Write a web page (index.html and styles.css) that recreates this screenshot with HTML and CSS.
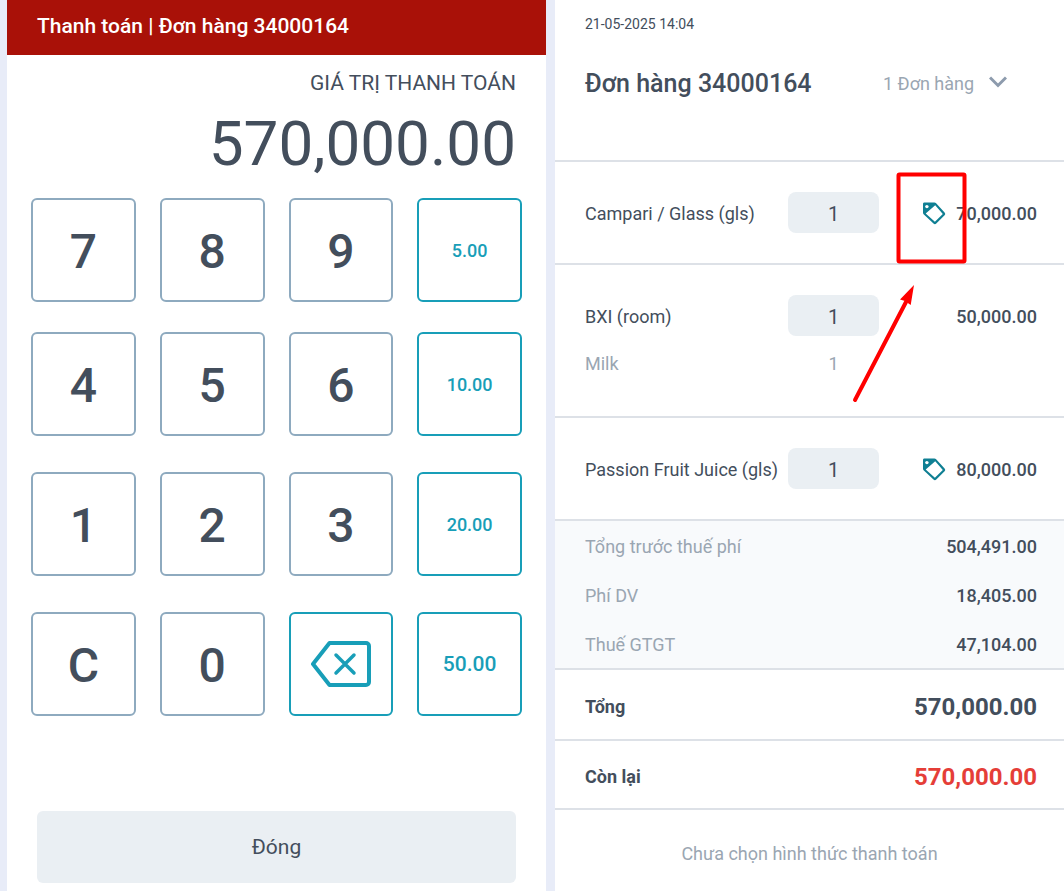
FILE: index.html
```
<!DOCTYPE html>
<html lang="vi">
<head>
  <meta charset="UTF-8">
  <meta name="viewport" content="width=device-width, initial-scale=1">
  <title>Thanh toán</title>
  <link rel="stylesheet" href="styles.css">
</head>
<body>
  <svg class="sprite" aria-hidden="true">
    <symbol id="tag" viewBox="0 0 24 24">
      <path d="M2 .5h10.500a2 2 0 0 1 1.400.6L22.600 10.500a2 2 0 0 1 0 2.800L14.300 21.600a2 2 0 0 1-2.800 0L1.600 12.200a2 2 0 0 1-.6-1.400V2a1.500 1.500 0 0 1 1-1.500z M13.200 3.200L3.700 11.400l9.200 8.400 7.900-7.900z" fill="currentColor" fill-rule="evenodd"/>
      <circle cx="4.900" cy="4.600" r="1.700" fill="#fff"/>
    </symbol>
  </svg>

  <div class="page">
    <main class="payment">
      <h1 class="payment-title">Thanh toán | Đơn hàng 34000164</h1>
      <div class="amount">
        <p class="amount-label">GIÁ TRỊ THANH TOÁN</p>
        <p class="amount-value">570,000.00</p>
      </div>
      <div class="keypad">
        <button type="button" class="key">7</button>
        <button type="button" class="key">8</button>
        <button type="button" class="key">9</button>
        <button type="button" class="key quick">5.00</button>
        <button type="button" class="key">4</button>
        <button type="button" class="key">5</button>
        <button type="button" class="key">6</button>
        <button type="button" class="key quick">10.00</button>
        <button type="button" class="key">1</button>
        <button type="button" class="key">2</button>
        <button type="button" class="key">3</button>
        <button type="button" class="key quick">20.00</button>
        <button type="button" class="key">C</button>
        <button type="button" class="key">0</button>
        <button type="button" class="key quick" aria-label="Xóa">
          <svg width="60" height="46" viewBox="0 0 60 46" fill="none" stroke="currentColor" stroke-width="4" stroke-linejoin="round" stroke-linecap="round">
            <path d="M18.500 2H55a3 3 0 0 1 3 3v36a3 3 0 0 1-3 3H18.500L2 23z"/>
            <path d="M25 14l18 18M43 14L25 32" stroke-width="3.500"/>
          </svg>
        </button>
        <button type="button" class="key quick large">50.00</button>
      </div>
      <button type="button" class="close">Đóng</button>
    </main>

    <aside class="order">
      <header class="order-head">
        <p class="order-date">21-05-2025 14:04</p>
        <div class="order-row">
          <h2 class="order-title">Đơn hàng 34000164</h2>
          <div class="picker">
            <select class="picker-select" aria-label="Chọn đơn hàng">
              <option>1 Đơn hàng</option>
            </select>
            <svg class="picker-arrow" width="18" height="12" viewBox="0 0 18 12" fill="none" stroke="currentColor" stroke-width="3">
              <path d="M1 1.500l8 8 8-8"/>
            </svg>
          </div>
        </div>
      </header>

      <div class="item">
        <label class="item-name" for="qty1">Campari / Glass (gls)</label>
        <input class="item-qty" id="qty1" type="text" value="1">
        <span class="item-price">
          <svg class="tag" width="24" height="24" aria-hidden="true"><use href="#tag"/></svg>
          70,000.00
        </span>
        <!-- khung đỏ và mũi tên chỉ vào nhãn giảm giá -->
        <svg class="hint" width="122" height="236" viewBox="0 0 122 236" aria-hidden="true">
          <rect x="50.500" y="4.500" width="66" height="87" rx="1" fill="none" stroke="#ff0000" stroke-width="4"/>
          <path d="M7 230L58 132" stroke="#ff0000" stroke-width="4" stroke-linecap="round"/>
          <path d="M66 115L52 129.500l5 1.500 5.700 4z" fill="#ff0000"/>
        </svg>
      </div>

      <div class="item">
        <label class="item-name" for="qty2">BXI (room)</label>
        <input class="item-qty" id="qty2" type="text" value="1">
        <span class="item-price">50,000.00</span>
        <span class="extra">Milk</span>
        <span class="extra extra-qty">1</span>
      </div>

      <div class="item">
        <label class="item-name" for="qty3">Passion Fruit Juice (gls)</label>
        <input class="item-qty" id="qty3" type="text" value="1">
        <span class="item-price">
          <svg class="tag" width="24" height="24" aria-hidden="true"><use href="#tag"/></svg>
          80,000.00
        </span>
      </div>

      <dl class="fees">
        <div class="fee">
          <dt>Tổng trước thuế phí</dt>
          <dd>504,491.00</dd>
        </div>
        <div class="fee">
          <dt>Phí DV</dt>
          <dd>18,405.00</dd>
        </div>
        <div class="fee">
          <dt>Thuế GTGT</dt>
          <dd>47,104.00</dd>
        </div>
      </dl>

      <dl class="totals">
        <div class="total">
          <dt>Tổng</dt>
          <dd>570,000.00</dd>
        </div>
        <div class="total remain">
          <dt>Còn lại</dt>
          <dd>570,000.00</dd>
        </div>
      </dl>

      <p class="no-method">Chưa chọn hình thức thanh toán</p>
    </aside>
  </div>
</body>
</html>
```
FILE: styles.css
```
*{
  margin: 0;
  padding: 0;
  box-sizing: border-box;
}
body{
  font-family: Roboto, "Liberation Sans", sans-serif;
  font-size: 18px;
  line-height: 24px;
  color: #434e5c;
  background-color: #e8ecf8;
}
button, input, select{
  font-family: inherit;
  color: inherit;
}
button{
  cursor: pointer;
}
.sprite{
  display: none;
}
.page{
  display: grid;
  grid-template-columns: minmax(0, 539fr) minmax(0, 509fr);
  gap: 9px;
  min-height: 100vh;
  padding-left: 7px;
}

/* payment */
.payment{
  display: flex;
  flex-direction: column;
  padding-bottom: 8px;
  background-color: #fff;
}
.payment-title{
  padding: 14px 30px 17px;
  font-size: 21px;
  font-weight: 500;
  color: #fff;
  background-color: #a91108;
}
.amount{
  padding: 16px 30px 18px;
  text-align: right;
}
.amount-label{
  font-size: 21px;
}
.amount-value{
  padding-top: 13px;
  font-size: 62px;
  line-height: 72px;
}
.keypad{
  display: grid;
  grid-template-columns: repeat(4, minmax(0, 1fr));
  grid-template-rows: 110px 116px 116px 104px;
  gap: 24px;
  align-items: start;
  padding: 0 24px;
}
.key{
  display: flex;
  align-items: center;
  justify-content: center;
  height: 104px;
  padding-top: 2px;
  border: 2px solid #8eaabf;
  border-radius: 6px;
  background-color: #fff;
  font-size: 48px;
  font-weight: 500;
}
.quick{
  padding-top: 0;
  border-color: #189eb8;
  color: #189eb8;
  font-size: 18px;
}
.large{
  font-size: 21px;
}
.close{
  height: 72px;
  margin: auto 30px 0;
  border: 0;
  border-radius: 6px;
  background-color: #eaeff3;
  font-size: 21px;
}

/* order */
.order{
  background-color: #fff;
}
.order-head{
  height: 162px;
  padding: 12px 57px 0 30px;
  border-bottom: 2px solid #dde1e7;
}
.order-date{
  font-size: 14px;
}
.order-row{
  display: flex;
  align-items: center;
  justify-content: space-between;
  padding-top: 32px;
}
.order-title{
  font-size: 25px;
  line-height: 32px;
  font-weight: 500;
}
.picker{
  position: relative;
  color: #9aa6b2;
}
.picker-select{
  appearance: none;
  padding-right: 32px;
  border: 0;
  background: none;
  font-size: 18px;
  line-height: 24px;
}
.picker-arrow{
  position: absolute;
  top: 4px;
  right: 0;
  color: #8d9bad;
  pointer-events: none;
}
.item{
  position: relative;
  display: grid;
  grid-template-columns: minmax(0, 1fr) 91px 158px;
  align-items: center;
  padding: 30px 27px 30px 30px;
  border-bottom: 2px solid #dde1e7;
}
.item-name{
  padding-top: 2px;
}
.item-qty{
  width: 100%;
  height: 41px;
  padding-top: 2px;
  border: 0;
  border-radius: 8px;
  background-color: #eaeff3;
  font-size: 20px;
  text-align: center;
}
.item-price{
  display: flex;
  align-items: center;
  justify-content: flex-end;
  gap: 10px;
  padding-top: 2px;
  font-weight: 500;
}
.tag{
  color: #0f7f93;
}
.extra{
  padding: 16px 0 10px;
  color: #9aa6b2;
}
.extra-qty{
  text-align: center;
}
.hint{
  position: absolute;
  top: 8px;
  right: 94px;
  pointer-events: none;
}
.fees{
  border-bottom: 2px solid #dde1e7;
  background-color: #f8fafc;
}
.fee, .total{
  display: flex;
  align-items: center;
  justify-content: space-between;
  padding: 2px 27px 0 30px;
}
.fee{
  height: 49px;
}
.fee dt{
  color: #9aa6b2;
}
.fee dd{
  font-weight: 500;
}
.total{
  height: 71px;
  padding-top: 4px;
  border-bottom: 2px solid #dde1e7;
}
.total dt{
  font-weight: 700;
}
.total dd{
  font-size: 24px;
  font-weight: 700;
}
.remain{
  height: 69px;
}
.remain dd{
  color: #e53e38;
}
.no-method{
  padding: 32px 27px 16px;
  text-align: center;
  color: #9aa6b2;
}
```
